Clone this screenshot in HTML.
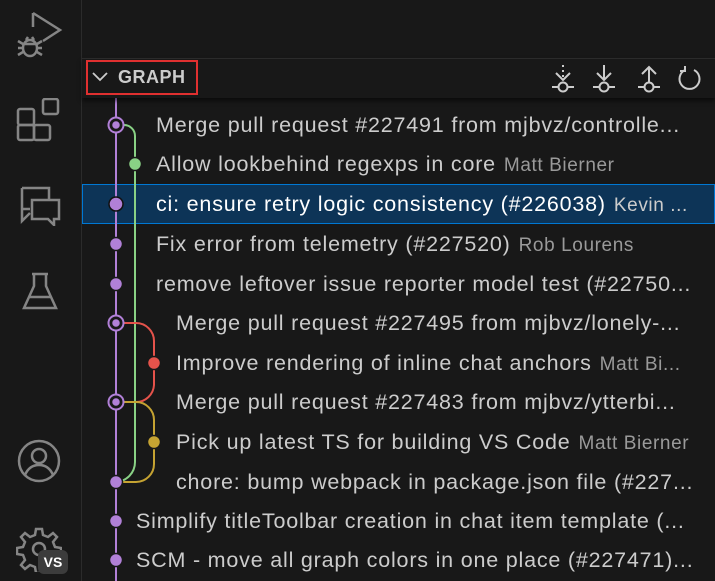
<!DOCTYPE html>
<html><head><style>
body{margin:0;width:715px;height:581px;background:#181818;overflow:hidden;font-family:"Liberation Sans",sans-serif;position:relative}
.ab{position:absolute;left:0;top:0;width:81px;height:581px;background:#181818;border-right:1px solid #2b2b2b}
.hdr{position:absolute;left:82px;top:58px;width:633px;height:39px;border-top:1px solid #2b2b2b;box-shadow:0 3px 4px #0008;background:#181818;z-index:2}
.gbox{position:absolute;left:86px;top:60px;width:112px;height:35px;border:2px solid #e03030;box-sizing:border-box}
.gt{position:absolute;left:118px;top:67px;color:#ccc;font-weight:bold;font-size:18px;letter-spacing:.5px}
.row{position:absolute;left:82px;width:633px;height:40px;line-height:40px;font-size:21.5px;letter-spacing:0.8px;color:#ccc;white-space:nowrap;overflow:hidden}
.a{color:#9a9a9a;font-size:19px;letter-spacing:0.6px;margin-left:8px}
.sel{background:#0d3457;outline:1px solid #0078d4;outline-offset:-1px;color:#fff}
svg{position:absolute}
</style></head><body>
<div class="ab">
<svg style="left:16px;top:10px" width="48" height="50" viewBox="0 0 48 50" fill="none" stroke="#858585" stroke-width="2.5"><path d="M17 3v14M17 3l27 17-17 11"/><ellipse cx="14" cy="38" rx="7" ry="8"/><path d="M8 34h12M2 31l5 3M2 45l5-3M26 31l-5 3M26 45l-5-3M2 38h5M21 38h5M10 30l2-3M18 30l-2-3"/></svg>
<svg style="left:16px;top:98px" width="46" height="46" viewBox="0 0 46 46" fill="none" stroke="#858585" stroke-width="2.5"><rect x="2" y="11" width="16" height="16" rx="2"/><rect x="2" y="27" width="16" height="15" rx="2"/><rect x="18" y="27" width="16" height="15" rx="2"/><rect x="27" y="1" width="15" height="15" rx="2"/></svg>
<svg style="left:18px;top:186px" width="44" height="40" viewBox="0 0 44 40" fill="none" stroke="#858585" stroke-width="2.5"><path d="M4 2h27v12M12 23H4V2M4 23v12l8-8"/><path d="M14 14h27v19h-5v6l-6-6H14z"/></svg>
<svg style="left:22px;top:272px" width="36" height="40" viewBox="0 0 36 40" fill="none" stroke="#858585" stroke-width="2.5"><path d="M10 2h16M12 2v12L2 36h32L24 14V2M7 25h22"/></svg>
<svg style="left:16px;top:438px" width="46" height="46" viewBox="0 0 46 46" fill="none" stroke="#858585" stroke-width="2.5"><circle cx="23" cy="23" r="20"/><circle cx="23" cy="18" r="7"/><path d="M9 37c3-7 8-10 14-10s11 3 14 10"/></svg>
<svg style="left:16px;top:526px" width="46" height="46" viewBox="0 0 46 46" fill="none" stroke="#858585" stroke-width="2.5"><path d="M20 3h6l1 6 5 2 5-4 4 4-4 5 2 5 6 1v6l-6 1-2 5 4 5-4 4-5-4-5 2-1 6h-6l-1-6-5-2-5 4-4-4 4-5-2-5-6-1v-6l6-1 2-5-4-5 4-4 5 4 5-2z"/><circle cx="23" cy="23" r="6"/></svg>
<div style="position:absolute;left:38px;top:550px;width:30px;height:24px;background:#3c3c3c;border-radius:6px;color:#fff;font-weight:bold;font-size:14px;line-height:24px;text-align:center">VS</div>
</div>
<div class="hdr"></div>
<div style="position:absolute;z-index:3;left:0;top:0">
<svg style="left:90px;top:70px" width="20" height="14" viewBox="0 0 20 14" fill="none" stroke="#ccc" stroke-width="1.8"><path d="M3 3l7 7 7-7"/></svg>
<div class="gt">GRAPH</div>
<div class="gbox"></div>
<svg style="left:548px;top:62px" width="160" height="34" viewBox="0 0 160 34" fill="none" stroke="#ccc" stroke-width="2"><path d="M15 3v2M15 8v2M15 13v2M8 11l7 7 7-7M4 25h7M19 25h7"/><circle cx="15" cy="25" r="4.5"/><path d="M56 3v15M49 11l7 7 7-7M45 25h7M60 25h7"/><circle cx="56" cy="25" r="4.5"/><path d="M101 5v15M94 12l7-7 7 7M90 25h7M105 25h7"/><circle cx="101" cy="25" r="4.5"/><path d="M137 8a10 10 0 1 0 9 0M137 4v5h-5"/></svg>
</div>
<div class="row sel" style="top:184px"></div>
<svg style="left:82px;top:97px" width="100" height="484" viewBox="82 97 100 484" fill="none" stroke-width="2">
<path d="M116 97V581" stroke="#b180d7"/>
<path d="M116 125h8a11 11 0 0 1 11 11V462a20 20 0 0 1-19 20" stroke="#89d185"/>
<path d="M116 323h20a18 18 0 0 1 18 18v44a18 18 0 0 1-18 17h-20" stroke="#e5534b"/>
<path d="M116 402h20a18 18 0 0 1 18 18v44a18 18 0 0 1-18 18h-20" stroke="#c5a332"/>
<g fill="#b180d7" stroke="#181818" stroke-width="1.5">
<circle cx="116" cy="125" r="7.5" fill="#181818" stroke="#b180d7" stroke-width="2"/><circle cx="116" cy="125" r="4.5"/>
<circle cx="116" cy="323" r="7.5" fill="#181818" stroke="#b180d7" stroke-width="2"/><circle cx="116" cy="323" r="4.5"/>
<circle cx="116" cy="402" r="7.5" fill="#181818" stroke="#b180d7" stroke-width="2"/><circle cx="116" cy="402" r="4.5"/>
<circle cx="116" cy="204" r="7" stroke="#111"/><circle cx="116" cy="244" r="6.5"/><circle cx="116" cy="284" r="6.5"/><circle cx="116" cy="482" r="6.5"/><circle cx="116" cy="521" r="6.5"/><circle cx="116" cy="560" r="6.5"/>
<circle cx="135" cy="164" r="6.5" fill="#89d185"/><circle cx="154" cy="363" r="6.5" fill="#e5534b"/><circle cx="154" cy="442" r="6.5" fill="#c5a332"/>
</g></svg>
<div class="row" style="top:105px;padding-left:74px">Merge pull request #227491 from mjbvz/controlle...</div>
<div class="row" style="top:144px;padding-left:74px">Allow lookbehind regexps in core<span class="a">Matt Bierner</span></div>
<div class="row" style="top:184px;padding-left:74px;color:#fff">ci: ensure retry logic consistency (#226038)<span class="a" style="color:#ccc">Kevin ...</span></div>
<div class="row" style="top:224px;padding-left:74px">Fix error from telemetry (#227520)<span class="a">Rob Lourens</span></div>
<div class="row" style="top:264px;padding-left:74px">remove leftover issue reporter model test (#22750...</div>
<div class="row" style="top:303px;padding-left:94px">Merge pull request #227495 from mjbvz/lonely-...</div>
<div class="row" style="top:343px;padding-left:94px">Improve rendering of inline chat anchors<span class="a">Matt Bi...</span></div>
<div class="row" style="top:382px;padding-left:94px">Merge pull request #227483 from mjbvz/ytterbi...</div>
<div class="row" style="top:422px;padding-left:94px">Pick up latest TS for building VS Code<span class="a">Matt Bierner</span></div>
<div class="row" style="top:462px;padding-left:94px">chore: bump webpack in package.json file (#227...</div>
<div class="row" style="top:501px;padding-left:54px">Simplify titleToolbar creation in chat item template (...</div>
<div class="row" style="top:540px;padding-left:54px">SCM - move all graph colors in one place (#227471)...</div>
</body></html>
